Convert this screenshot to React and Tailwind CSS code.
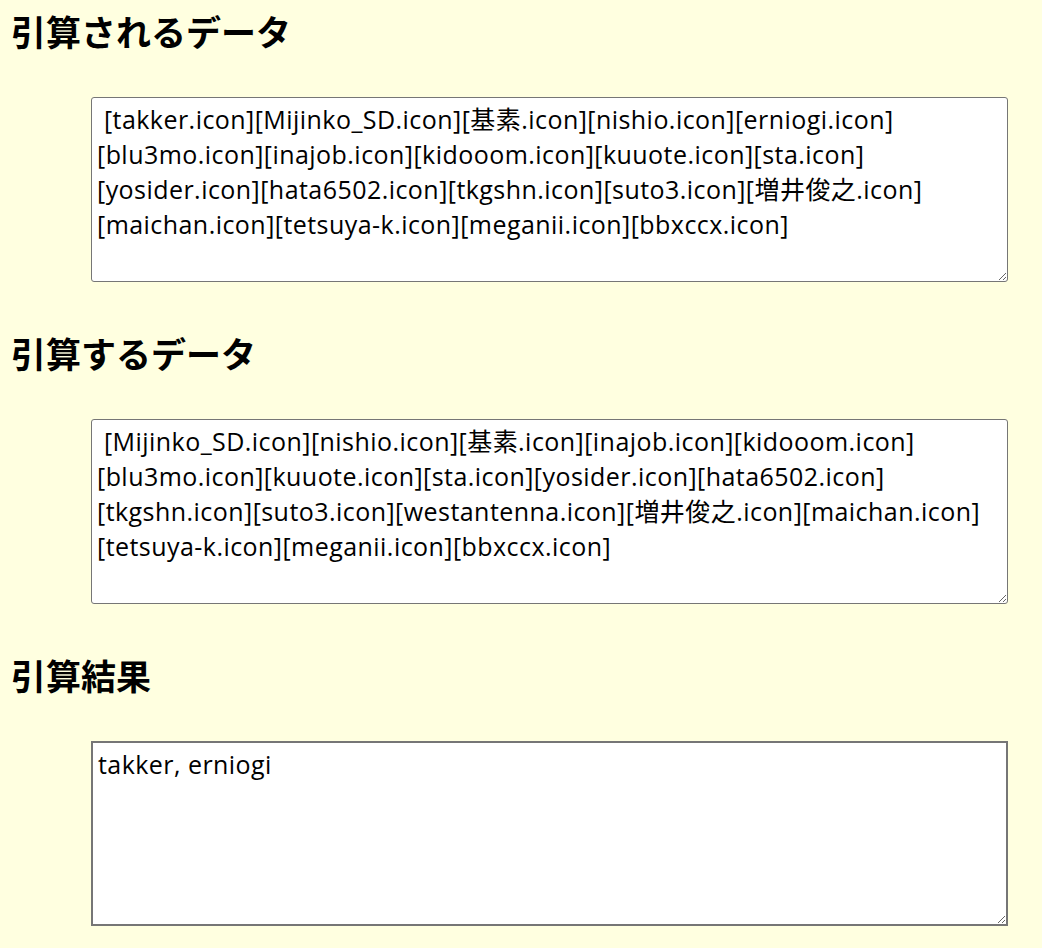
import React from 'react';

const headFont = { fontFamily: '"Noto Sans CJK JP", "Noto Sans", sans-serif' };
const bodyFont = { fontFamily: '"Open Sans", "Noto Sans CJK JP", sans-serif' };

const sections = [
  {
    title: '引算されるデータ',
    value: [
      ' [takker.icon][Mijinko_SD.icon][基素.icon][nishio.icon][erniogi.icon]',
      '[blu3mo.icon][inajob.icon][kidooom.icon][kuuote.icon][sta.icon]',
      '[yosider.icon][hata6502.icon][tkgshn.icon][suto3.icon][増井俊之.icon]',
      '[maichan.icon][tetsuya-k.icon][meganii.icon][bbxccx.icon]',
    ].join('\n'),
    result: false,
  },
  {
    title: '引算するデータ',
    value: [
      ' [Mijinko_SD.icon][nishio.icon][基素.icon][inajob.icon][kidooom.icon]',
      '[blu3mo.icon][kuuote.icon][sta.icon][yosider.icon][hata6502.icon]',
      '[tkgshn.icon][suto3.icon][westantenna.icon][増井俊之.icon][maichan.icon]',
      '[tetsuya-k.icon][meganii.icon][bbxccx.icon]',
    ].join('\n'),
    result: false,
  },
  {
    title: '引算結果',
    value: 'takker, erniogi',
    result: true,
  },
];

export default function App() {
  return (
    <div className="min-h-screen bg-[#ffffe0] pt-[11px] pb-[20px] text-black" style={headFont}>
      {sections.map((s, i) => (
        <section key={s.title} className={i > 0 ? 'mt-[51px]' : ''}>
          <h2 className="pl-[11px] text-[35px] font-bold leading-[40px]">{s.title}</h2>
          <div className="mt-[46px] pl-[91px] pr-[34px]">
            <textarea
              readOnly
              defaultValue={s.value}
              className={`block h-[185px] w-full bg-white px-[5px] py-[4px] text-[25px] leading-[35px] tracking-[0.45px] text-black outline-none ${
                s.result ? 'border-2 border-[#767676]' : 'rounded-[3px] border border-[#767676]'
              }`}
              style={bodyFont}
            />
          </div>
        </section>
      ))}
    </div>
  );
}
